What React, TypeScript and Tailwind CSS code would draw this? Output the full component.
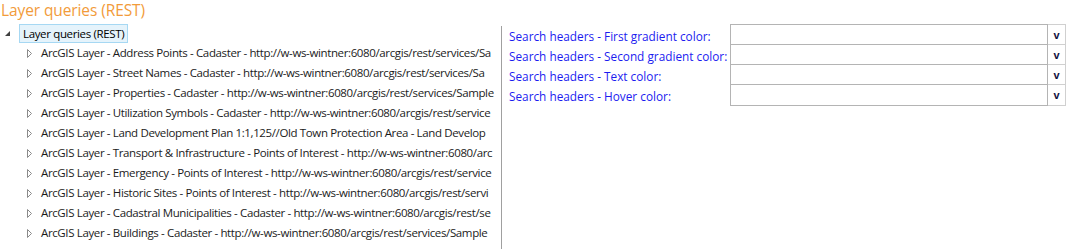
import React from "react";

const children = [
  "ArcGIS Layer - Address Points - Cadaster - http://w-ws-wintner:6080/arcgis/rest/services/Sa",
  "ArcGIS Layer - Street Names - Cadaster - http://w-ws-wintner:6080/arcgis/rest/services/Sa",
  "ArcGIS Layer - Properties - Cadaster - http://w-ws-wintner:6080/arcgis/rest/services/Sample",
  "ArcGIS Layer - Utilization Symbols - Cadaster - http://w-ws-wintner:6080/arcgis/rest/service",
  "ArcGIS Layer - Land Development Plan 1:1,125//Old Town Protection Area - Land Develop",
  "ArcGIS Layer - Transport & Infrastructure - Points of Interest - http://w-ws-wintner:6080/arc",
  "ArcGIS Layer - Emergency - Points of Interest - http://w-ws-wintner:6080/arcgis/rest/service",
  "ArcGIS Layer - Historic Sites - Points of Interest - http://w-ws-wintner:6080/arcgis/rest/servi",
  "ArcGIS Layer - Cadastral Municipalities - Cadaster - http://w-ws-wintner:6080/arcgis/rest/se",
  "ArcGIS Layer - Buildings - Cadaster - http://w-ws-wintner:6080/arcgis/rest/services/Sample",
];

const fields = [
  "Search headers - First gradient color:",
  "Search headers - Second gradient color:",
  "Search headers - Text color:",
  "Search headers - Hover color:",
];

export default function App() {
  return (
    <div
      className="w-[1069px] h-[249px] bg-white overflow-hidden flex flex-col"
      style={{ fontFamily: '"Open Sans", "Noto Sans", sans-serif' }}
    >
      <div className="h-[22px] pl-[1px] text-[15.5px] leading-[20px] text-[#f29b3a] tracking-[-0.1px]">
        Layer queries (REST)
      </div>
      <div className="flex flex-1 min-h-0">
        <div className="w-[494px] shrink-0 overflow-hidden flex flex-col pt-[2px]">
          <div className="flex items-center h-[19px]">
            <svg width="19" height="18" viewBox="0 0 19 18" className="shrink-0">
              <polygon points="10,6 10,11 5,11" fill="#404040" />
            </svg>
            <div className="h-[19px] pl-[3px] pr-[3px] border border-[#a6d8f3] bg-[#e5f3fb] text-[11.5px] leading-[17px] text-black whitespace-nowrap tracking-[-0.35px]">
              Layer queries (REST)
            </div>
          </div>
          {children.map((c) => (
            <div key={c} className="flex items-center h-[20px] whitespace-nowrap">
              <svg width="41" height="20" viewBox="0 0 41 20" className="shrink-0">
                <polygon points="27.5,6.5 27.5,14.5 31.5,10.5" fill="none" stroke="#8a8a8a" strokeWidth="1" />
              </svg>
              <span className="text-[11.5px] leading-[20px] text-[#1b1b1b] tracking-[-0.37px]">{c}</span>
            </div>
          ))}
        </div>
        <div className="w-[7px] shrink-0" />
        <div className="w-px shrink-0 bg-[#a0a0a0] mt-[4px]" />
        <div className="flex-1 pl-[7px] pt-[2px]">
          {fields.map((f, i) => (
            <div key={f} className={`flex h-[21px] ${i > 0 ? "-mt-px" : ""}`}>
              <div className="w-[221px] pt-[2px] text-[11.8px] leading-[21px] text-[#1c1cf0] whitespace-nowrap">
                {f}
              </div>
              <div className="w-[318px] h-[22px] border border-[#b4b4b4] bg-white" />
              <div className="w-[18px] h-[22px] border border-l-0 border-[#d0d0d0] bg-white flex items-center justify-center">
                <span
                  className="text-[11px] font-bold text-[#101040]"
                  style={{ fontFamily: '"Liberation Sans", sans-serif' }}
                >
                  v
                </span>
              </div>
            </div>
          ))}
        </div>
      </div>
    </div>
  );
}
